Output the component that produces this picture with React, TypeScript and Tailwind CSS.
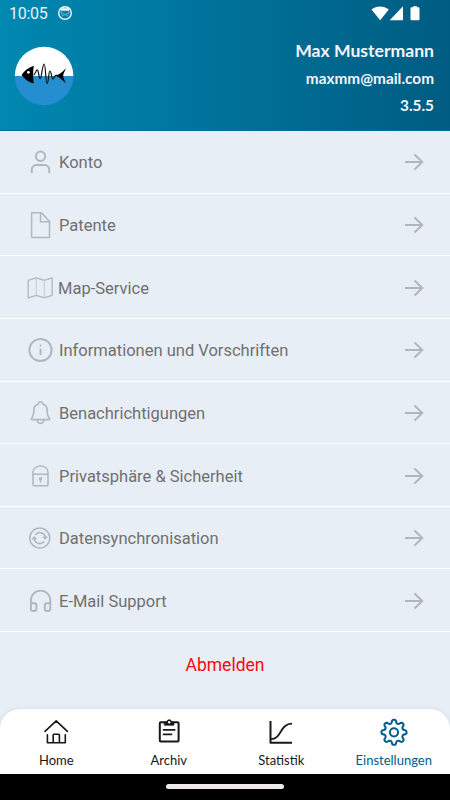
import type { ReactNode } from "react";

function RowIcon({ children }: { children: ReactNode }) {
  return (
    <svg className="h-8 w-8 shrink-0" viewBox="0 0 32 32" fill="none" stroke="#b2b7be" strokeWidth="1.5" strokeLinecap="round" strokeLinejoin="round">
      {children}
    </svg>
  );
}

// Outline of an eight-toothed gear with rounded teeth, centred in a 32-unit box.
const gearPath =
  Array.from({ length: 144 }, (_, i) => {
    const angle = (i / 144) * Math.PI * 2;
    const wave = Math.cos(angle * 8);
    const radius = 10.9 + 1.75 * Math.tanh(wave * 1.7);
    const x = 16 + radius * Math.cos(angle);
    const y = 16.3 + radius * Math.sin(angle);
    return `${i === 0 ? "M" : "L"}${x.toFixed(2)} ${y.toFixed(2)}`;
  }).join("") + "Z";

const rows: { label: string; gap: string; icon: ReactNode }[] = [
  {
    label: "Konto",
    gap: "pl-[3px]",
    icon: (
      <g strokeWidth="2">
        <circle cx="16.5" cy="10.3" r="4.7" />
        <path d="M7.8 26.2v-2.6a4.5 4.5 0 0 1 4.5-4.5h8.4a4.5 4.5 0 0 1 4.5 4.5v2.6" />
      </g>
    ),
  },
  { label: "Patente", gap: "pl-[3px]", icon: <path d="M8.6 3.8h8.9l8 8.6v15.5a.7.7 0 0 1-.7.7H8.2a.6.6 0 0 1-.6-.6V4.6a.8.8 0 0 1 1-.8ZM16.5 3.8v9h9" /> },
  {
    label: "Map-Service",
    gap: "pl-[2px]",
    icon: (
      <>
        <path strokeWidth="1.3" d="m4.2 8.3 8.1-2.5 8 2.5 7.8-2.5v17.5l-7.8 2.5-8-2.5-8.1 2.5Z" />
        <path strokeWidth="1" stroke="#c5cad1" d="M12.3 6v17.2M20.3 8.5v17" />
      </>
    ),
  },
  {
    label: "Informationen und Vorschriften",
    gap: "pl-[3px]",
    icon: (
      <g strokeWidth="2">
        <circle cx="16.5" cy="16" r="11.1" />
        <path d="M16.5 15.5v4.8M16.5 11.5v.1" />
      </g>
    ),
  },
  {
    label: "Benachrichtigungen",
    gap: "pl-[3px]",
    icon: (
      <path strokeWidth="1.6" d="M14.4 7c0-3 4.2-3 4.2 0 3 .8 4.6 3 4.6 6.3 0 4.5.4 6 2.3 8.2.4.6.2 1.1-.5 1.1H8c-.7 0-.9-.5-.5-1.1 1.9-2.2 2.3-3.7 2.3-8.2 0-3.3 1.6-5.5 4.6-6.3ZM13.2 22.8c.2 4.8 6.4 4.8 6.6 0" />
    ),
  },
  {
    label: "Privatsphäre & Sicherheit",
    gap: "pl-[3px]",
    icon: (
      <>
        <path d="M9 14.2h15v10.6a1 1 0 0 1-1 1H10a1 1 0 0 1-1-1ZM9 14.2V12c0-8 15-8 15 0v2.2" />
        <circle cx="16.5" cy="18.7" r="1" />
        <path d="M16.5 19.5v2.4" />
      </>
    ),
  },
  {
    label: "Datensynchronisation",
    gap: "pl-[3px]",
    icon: (
      <>
        <circle cx="15.8" cy="16" r="10" />
        <path d="M11.7 12.4a5.5 5.5 0 0 1 9.6 4M19.8 19.8a5.5 5.5 0 0 1-9.5-4.2M8.8 17l1.5-1.8 1.7 1.6M19.6 15.2l1.7 1.6 1.5-1.8" />
      </>
    ),
  },
  {
    label: "E-Mail Support",
    gap: "pl-[3px]",
    icon: (
      <g strokeWidth="1.9">
        <path d="M6.9 18.5v-3.2a9.7 9.7 0 0 1 19.4 0v3.2" />
        <path d="M6.9 18.2h3.5a2 2 0 0 1 2 2v3.5a2.3 2.3 0 0 1-2.3 2.3H9.2a2.3 2.3 0 0 1-2.3-2.3ZM26.3 18.2h-3.5a2 2 0 0 0-2 2v3.5a2.3 2.3 0 0 0 2.3 2.3h.9a2.3 2.3 0 0 0 2.3-2.3Z" />
      </g>
    ),
  },
];

function StatusBar() {
  return (
    <div className="flex h-[27px] items-center pl-[9px] pr-[29px] font-[Roboto,sans-serif] text-[16px] leading-[27px] text-white/90">
      <span className="tracking-[-0.3px]">10:05</span>
      <svg className="-mt-px ml-[10px] h-4 w-4" viewBox="0 0 16 16" fill="none" stroke="#eef6fa">
        <circle cx="8" cy="8" r="6.3" strokeWidth="1.4" />
        <path d="M3 3.2h10L11.8 5.4H4.2Z" fill="#eef6fa" strokeWidth=".5" />
        <path d="M4.2 5.8v2.6l1.6.9M11.8 5.8v2.6l-1.6.9M5 11.2l2-1.5h2l2 1.5M6.5 7.8v.8M9.5 7.8v.8" strokeWidth=".9" opacity=".55" />
      </svg>
      <svg className="ml-auto h-[15px] w-[50px]" viewBox="0 0 50 15" fill="#fff">
        <path d="M.5 3.5C5.5 -.5 12.8 -.5 17.8 3.5L9.2 14.3ZM32 .2v14H18.7ZM42 1.2V.2h4v1h1.5q1 0 1 1v11q0 1-1 1h-7q-1 0-1-1v-11q0-1 1-1Z" />
      </svg>
    </div>
  );
}

function Logo() {
  return (
    <svg className="h-[60px] w-[60px]" viewBox="0 0 60 60">
      <path d="M.8 30a29.3 29.3 0 0 1 58.6 0Z" fill="#fff" />
      <path d="M.8 30a29.3 29.3 0 0 0 58.6 0Z" fill="#248ed0" />
      <path d="M7.5 29c3-4 6.5-7.2 12.3-9.2-.9 5.5-.9 12 0 17.7-5.5-1.2-9.3-4.5-12.3-8.5Z" />
      <circle cx="14.4" cy="26.3" r="1.4" fill="#fff" />
      <path d="M19.5 29c2 0 2.2-5.2 3.7-5.2s1.6 8.8 3 8.8 2.2-14.6 3.9-14.6 1.4 19.5 3 19.5 1.4-12.5 2.8-12.5 1.7 8 3 8 1.4-3.8 3.6-3.8" fill="none" stroke="#111" strokeWidth="1.2" />
      <path d="M40.5 29.2c5 0 8-3.4 11.5-7-1 3-2.8 5-2.8 7.5 0 2.4 1.5 4.7 2.6 7.5-3.2-2.6-6.3-6.6-11.3-8Z" />
    </svg>
  );
}

const tabs = [
  {
    label: "Home",
    color: "text-[#181818]",
    icon: <path strokeWidth="1.6" d="m5 15.4 11.2-10.6L27.4 15.4M7.4 18.7v8.1h17.9v-8.1M13.2 26.8V19q0-.7.7-.7h4.8q.7 0 .7.7v7.8" />,
  },
  {
    label: "Archiv",
    color: "text-[#181818]",
    icon: (
      <>
        <rect x="6.8" y="6.3" width="18.8" height="19.3" rx="1" strokeWidth="2" />
        <path d="M10.5 13.8h11.2M10.5 18.3h8" strokeWidth="1.8" />
        <path d="M11.5 6.2h2.2c0-3.3 5-3.3 5 0h2.2v3h-9.4Z" fill="currentColor" strokeWidth=".7" />
        <circle cx="16.2" cy="6.2" r="1.2" fill="#fff" stroke="none" />
      </>
    ),
  },
  {
    label: "Statistik",
    color: "text-[#181818]",
    icon: (
      <g strokeWidth="2" strokeLinecap="butt">
        <path d="M5.5 5v21.7H27" />
        <path d="M6 23.1c11 0 8.5-15.4 21-15.4" strokeWidth="1.8" />
      </g>
    ),
  },
  {
    label: "Einstellungen",
    color: "text-[#005d8b]",
    icon: (
      <g strokeWidth="2">
        <circle cx="16" cy="16.3" r="4.1" />
        <path d={gearPath} />
      </g>
    ),
  },
];

export default function App() {
  return (
    <div className="flex h-[800px] w-[450px] flex-col overflow-hidden bg-[#e7eef6] font-[Roboto,sans-serif]">
      <header className="h-[131px] shrink-0 border-b border-[#006e97] bg-linear-to-r from-[#0088b1] to-[#005c82]">
        <StatusBar />
        <div className="flex justify-between pl-[14px] pr-4 pt-[9px]">
          <div className="pt-[10px]">
            <Logo />
          </div>
          <div className="flex flex-col items-end font-[Lato,sans-serif] font-bold text-[#f3f4fa]">
            <span className="text-[17.6px] leading-[29px]">Max Mustermann</span>
            <span className="text-[15.35px] leading-[27px]">maxmm@mail.com</span>
            <span className="text-[15.35px] leading-[26px]">3.5.5</span>
          </div>
        </div>
      </header>

      <main className="flex-1">
        {rows.map((row) => (
          <div key={row.label} className="flex h-[62.65px] items-center border-b-[1.5px] border-white pl-6 pr-[26px] pt-px">
            <RowIcon>{row.icon}</RowIcon>
            <span className={`${row.gap} pt-[3px] text-[16.5px] text-[#70706f]`}>{row.label}</span>
            <svg className="ml-auto h-5 w-5" viewBox="0 0 20 20" fill="none" stroke="#b2b5b9" strokeWidth="1.9">
              <path d="M1 10h17.3M10.5 2.5l7.8 7.5-7.8 7.5" />
            </svg>
          </div>
        ))}
        <div className="flex h-[65px] items-center justify-center text-[17.5px] text-[#fc0810]">Abmelden</div>
      </main>

      <nav className="grid h-[65px] shrink-0 grid-cols-4 rounded-t-[20px] bg-white shadow-[0_0_4px_rgba(80,100,130,0.15)]">
        {tabs.map((tab) => (
          <div key={tab.label} className={`flex flex-col items-center pt-[7px] ${tab.color}`}>
            <svg className="h-8 w-8" viewBox="0 0 32 32" fill="none" stroke="currentColor" strokeLinecap="round" strokeLinejoin="round">
              {tab.icon}
            </svg>
            <span className="pt-[3px] font-[Lato,sans-serif] text-[13px] leading-[18px]">{tab.label}</span>
          </div>
        ))}
      </nav>
      <div className="flex h-[26px] shrink-0 justify-center bg-black pt-[10px]">
        <div className="h-[5px] w-[118px] rounded-full bg-[#eeeaec]" />
      </div>
    </div>
  );
}
